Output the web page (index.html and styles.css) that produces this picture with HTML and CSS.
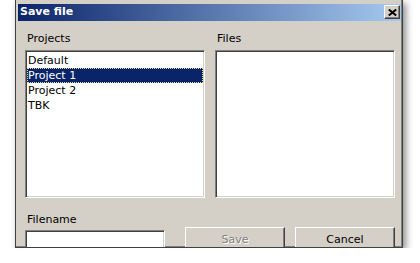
FILE: index.html
```html
<!DOCTYPE html>
<html>
<head>
<meta charset="utf-8">
<link rel="stylesheet" href="styles.css">
</head>
<body>
<div class="window">
  <div class="titlebar">
    <span class="title">Save file</span>
    <button class="close" type="button" aria-label="Close">
      <svg width="9" height="7" viewBox="0 0 9 7"><path d="M0.8 0.5 L8.2 6.5 M8.2 0.5 L0.8 6.5" stroke="#000" stroke-width="2" fill="none"/></svg>
    </button>
  </div>
  <div class="content">
    <div class="columns">
      <div class="col">
        <div class="label">Projects</div>
        <div class="listbox">
          <div class="row">Default</div>
          <div class="row selected">Project 1</div>
          <div class="row">Project 2</div>
          <div class="row">TBK</div>
        </div>
      </div>
      <div class="col">
        <div class="label">Files</div>
        <div class="listbox"></div>
      </div>
    </div>
    <div class="bottom">
      <div class="namecol">
        <div class="label">Filename</div>
        <div class="field"></div>
      </div>
      <button class="btn disabled" type="button">Save</button>
      <button class="btn cancel" type="button">Cancel</button>
    </div>
  </div>
</div>
</body>
</html>
```

FILE: styles.css
```css
html, body {
  margin: 0;
  padding: 0;
  background: #ffffff;
}
body {
  padding-left: 15px;
  font-family: "DejaVu Sans", Verdana, sans-serif;
  font-size: 11px;
  color: #000;
}
.window {
  width: 388px;
  height: 248px;
  box-sizing: border-box;
  border: 1px solid #404040;
  border-top: 0;
  padding: 4px 1px 0 2px;
  background: #d4d0c8;
  overflow: hidden;
  box-shadow: inset -1px -1px #808080, 3px 3px 7px rgba(0, 0, 0, 0.45);
}
.titlebar {
  height: 17px;
  display: flex;
  align-items: flex-start;
  justify-content: space-between;
  background: linear-gradient(to right, #0a246a, #a6caf0);
}
.title {
  color: #fff;
  font-weight: bold;
  font-size: 11px;
  line-height: 15px;
  padding-left: 2px;
}
.close {
  width: 16px;
  height: 14px;
  margin: 1px 1px 0 0;
  padding: 0;
  box-sizing: border-box;
  background: #d4d0c8;
  border: 1px solid;
  border-color: #fff #404040 #404040 #fff;
  box-shadow: inset -1px -1px #808080;
  display: flex;
  align-items: center;
  justify-content: center;
}
.close svg { display: block; }
.content {
  padding: 11px 0 0 7px;
}
.columns {
  display: grid;
  grid-template-columns: 180px 180px;
  column-gap: 10px;
}
.label {
  line-height: 13px;
  padding-left: 2px;
}
.col .label {
  margin-bottom: 5px;
}
.listbox {
  height: 148px;
  box-sizing: border-box;
  background: #fff;
  border: 1px solid;
  border-color: #808080 #fff #fff #808080;
  box-shadow: inset 1px 1px #404040, inset -1px -1px #d4d0c8;
  padding: 2px 1px 0 1px;
}
.row {
  height: 15px;
  line-height: 15px;
  padding-left: 1px;
  white-space: nowrap;
}
.row.selected {
  background: #0a246a;
  color: #fff;
  outline: 1px dotted #e8d890;
  outline-offset: -1px;
}
.bottom {
  display: flex;
  align-items: flex-start;
  margin-top: 15px;
}
.namecol {
  width: 140px;
}
.field {
  margin-top: 4px;
  height: 24px;
  box-sizing: border-box;
  background: #fff;
  border: 1px solid;
  border-color: #808080 #fff #fff #808080;
  box-shadow: inset 1px 1px #404040, inset -1px -1px #d4d0c8;
}
.btn {
  width: 100px;
  height: 25px;
  margin-top: 14px;
  box-sizing: border-box;
  background: #d4d0c8;
  border: 1px solid;
  border-color: #fff #404040 #404040 #fff;
  box-shadow: inset -1px -1px #808080;
  font-family: "DejaVu Sans", Verdana, sans-serif;
  font-size: 11px;
  color: #000;
  padding: 0;
}
.btn.disabled {
  margin-left: 20px;
  color: #808080;
  text-shadow: 1px 1px #fff;
}
.btn.cancel {
  margin-left: 10px;
}
```
